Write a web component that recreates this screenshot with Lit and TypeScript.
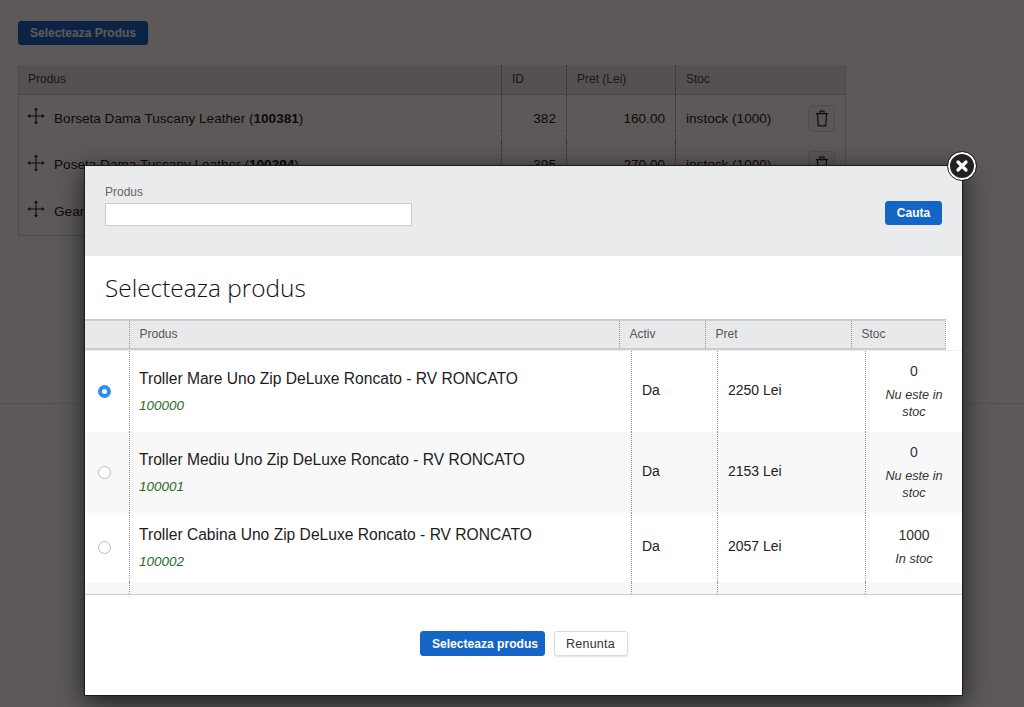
import { LitElement, html, css, svg } from 'lit';
import { customElement } from 'lit/decorators.js';

const backRows = [
  { name: 'Borseta Dama Tuscany Leather', code: '100381', id: 382, price: '160.00' },
  { name: 'Poseta Dama Tuscany Leather', code: '100394', id: 395, price: '270.00' },
  { name: 'Gear Dama Tuscany Leather', code: '100402', id: 403, price: '310.00' },
];

const products = [
  { name: 'Troller Mare Uno Zip DeLuxe Roncato - RV RONCATO', code: '100000', price: '2250 Lei', stock: '0', note: 'Nu este in stoc', checked: true },
  { name: 'Troller Mediu Uno Zip DeLuxe Roncato - RV RONCATO', code: '100001', price: '2153 Lei', stock: '0', note: 'Nu este in stoc', checked: false },
  { name: 'Troller Cabina Uno Zip DeLuxe Roncato - RV RONCATO', code: '100002', price: '2057 Lei', stock: '1000', note: 'In stoc', checked: false },
];

const moveIcon = svg`<path d="M9 1.5v15M1.5 9h15" fill="none" stroke="currentColor" stroke-width="1.1"/>
  <path d="M9 .5l2 2.6H7zM9 17.5l-2-2.6h4zM.5 9l2.6-2v4zM17.5 9l-2.6 2V7z" fill="currentColor"/>`;

const trashIcon = svg`<path d="M1 3.6h12M5 3.4V1.2h4v2.2M2.4 3.8l.9 12h7.4l.9-12" fill="none" stroke="currentColor" stroke-width="1.2"/>`;

@customElement('app-root')
export class AppRoot extends LitElement {
  static styles = css`
    :host {
      display: block;
      position: relative;
      height: 707px;
      overflow: hidden;
      background: #fff;
      font-family: "Liberation Sans", Arial, sans-serif;
      color: #222;
    }

    .content {
      height: 404px;
      box-sizing: border-box;
      padding: 21px 18px 0;
      border-bottom: 1px solid #e4e4e4;
    }

    button {
      font-family: inherit;
      cursor: pointer;
    }

    .btn-primary {
      height: 24px;
      padding: 0 11px;
      border: 1px solid #125bb5;
      border-radius: 3px;
      background: #1565c7;
      color: #fff;
      font-size: 12px;
      font-weight: bold;
    }

    .content .btn-primary {
      display: block;
      width: 130px;
      padding: 0;
    }

    table {
      border-spacing: 0;
      table-layout: fixed;
    }

    .back-table {
      width: 828px;
      margin-top: 20px;
      border: 1px solid #d8d8d8;
      border-top: 0;
      font-size: 13.6px;
    }

    .back-table th {
      height: 28px;
      padding: 0 10px 1px;
      background: #e8e9eb;
      border-bottom: 1px solid #c8c8c8;
      color: #444;
      font-size: 12px;
      font-weight: normal;
      text-align: left;
    }

    .back-table td {
      height: 46.5px;
      padding: 0 10px;
      color: #222;
    }

    .back-table th:first-child,
    .back-table td:first-child {
      padding-left: 9px;
    }

    .back-table th + th,
    .back-table td + td {
      border-left: 1px dotted #777;
    }

    .back-table .num {
      text-align: right;
    }

    .name-cell {
      display: flex;
      align-items: center;
      gap: 9px;
    }

    .move {
      width: 18px;
      height: 18px;
      margin: -4px 0 0 -1px;
      color: #222;
    }

    .stock-cell {
      display: flex;
      align-items: center;
      justify-content: space-between;
    }

    .trash {
      display: flex;
      align-items: center;
      justify-content: center;
      width: 27px;
      height: 27px;
      box-sizing: border-box;
      border: 1px solid #ddd;
      border-radius: 4px;
      background: #f6f6f6;
      color: #222;
    }

    .dim {
      position: absolute;
      inset: 0;
      background: rgba(6, 0, 0, 0.65);
    }

    .modal {
      position: absolute;
      left: 84px;
      top: 165px;
      width: 879px;
      height: 531px;
      box-sizing: border-box;
      border: 1px solid #1c1a1a;
      background: #fff;
      box-shadow: 0 6px 24px rgba(0, 0, 0, 0.7);
    }

    .close {
      position: absolute;
      left: 863px;
      top: -14px;
      width: 28px;
      height: 28px;
      padding: 0;
      box-sizing: border-box;
      border: 2px solid #fff;
      border-radius: 50%;
      outline: 1px solid #222;
      background: #222;
      color: #fff;
      display: flex;
      align-items: center;
      justify-content: center;
    }

    .search {
      display: flex;
      justify-content: space-between;
      align-items: flex-start;
      height: 90px;
      box-sizing: border-box;
      padding: 19px 20px 0;
      background: #e9ebed;
    }

    .search label {
      display: block;
      margin-bottom: 4px;
      color: #666;
      font-size: 12px;
      line-height: 14px;
    }

    .search input {
      display: block;
      width: 307px;
      height: 23px;
      box-sizing: border-box;
      border: 1px solid #ccc;
      background: #fff;
    }

    .search .btn-primary {
      width: 57px;
      margin-top: 16px;
      padding: 0;
      border-color: #1565c7;
    }

    h2 {
      margin: 0;
      height: 63px;
      box-sizing: border-box;
      padding: 15px 20px 0;
      font-family: "Open Sans", sans-serif;
      font-size: 24.4px;
      font-weight: 300;
      line-height: 33px;
      color: #111;
    }

    .head-table {
      width: 860px;
      border-top: 2px solid #ccc;
      border-bottom: 2px solid #ccc;
      border-right: 1px dotted #999;
      box-sizing: border-box;
    }

    .head-table th {
      height: 25px;
      padding: 0 9.5px 2px;
      background: #e8e9eb;
      color: #555;
      font-size: 12px;
      font-weight: normal;
      text-align: left;
    }

    .head-table th + th {
      border-left: 1px dotted #999;
    }

    .scroller {
      height: 245px;
      overflow: hidden;
      border-bottom: 1px solid #ccc;
      box-sizing: border-box;
      border-top: 1px solid #eee;
    }

    .body-table {
      width: 877px;
      font-size: 14px;
    }

    .body-table td {
      padding: 0 10px 3px;
      color: #222;
    }

    .body-table td + td {
      border-left: 1px dotted #999;
    }

    .body-table tr:nth-child(even) td {
      background: #f8f8f8;
    }

    .body-table .radio-cell {
      padding: 0 6px 2px 0;
      text-align: center;
    }

    .radio {
      display: inline-block;
      width: 13px;
      height: 13px;
      box-sizing: border-box;
      border: 1px solid #bbb;
      border-radius: 50%;
      background: #fff;
      vertical-align: middle;
    }

    .radio.on {
      border: 4.5px solid #2f8cf0;
    }

    .body-table .product-cell {
      padding: 0 10px 0 9px;
    }

    .product-name {
      font-size: 15.6px;
      line-height: 17px;
      margin-bottom: 10px;
      color: #1c1c1c;
    }

    .product-code {
      color: #2b6a2b;
      font-size: 13.5px;
      font-style: italic;
      line-height: 17px;
    }

    .body-table .stock-col {
      padding: 0 10px;
      text-align: center;
      color: #333;
    }

    .stock-qty {
      line-height: 17px;
      margin-bottom: 7px;
    }

    .stock-note {
      font-size: 12.7px;
      font-style: italic;
      line-height: 17px;
    }

    .actions {
      display: flex;
      justify-content: center;
      gap: 9px;
      padding-top: 36px;
    }

    .actions .btn-primary {
      width: 125px;
      height: 25px;
      padding: 0 0 0 6px;
      border-color: #1565c7;
      font-size: 12.1px;
    }

    .btn-plain {
      width: 74px;
      height: 25px;
      padding: 0;
      box-sizing: border-box;
      border: 1px solid #ddd;
      border-radius: 3px;
      background: #fff;
      box-shadow: 0 1px 2px rgba(0, 0, 0, 0.12);
      color: #333;
      font-size: 12.5px;
      letter-spacing: 0.25px;
    }
  `;

  renderBack() {
    return html`
      <div class="content">
        <button class="btn-primary">Selecteaza Produs</button>
        <table class="back-table">
          <colgroup>
            <col style="width:482px" /><col style="width:65px" /><col style="width:109px" /><col style="width:170px" />
          </colgroup>
          <thead>
            <tr><th>Produs</th><th>ID</th><th>Pret (Lei)</th><th>Stoc</th></tr>
          </thead>
          <tbody>
            ${backRows.map(
              (row) => html`
                <tr>
                  <td>
                    <div class="name-cell">
                      <svg class="move" viewBox="0 0 18 18">${moveIcon}</svg>
                      <span>${row.name} (<b>${row.code}</b>)</span>
                    </div>
                  </td>
                  <td class="num">${row.id}</td>
                  <td class="num">${row.price}</td>
                  <td>
                    <div class="stock-cell">
                      <span>instock (1000)</span>
                      <span class="trash">
                        <svg width="14" height="17" viewBox="0 0 14 17">${trashIcon}</svg>
                      </span>
                    </div>
                  </td>
                </tr>
              `,
            )}
          </tbody>
        </table>
      </div>
    `;
  }

  renderModal() {
    return html`
      <div class="modal">
        <button class="close" aria-label="Inchide">
          <svg width="14" height="14" viewBox="0 0 14 14">
            <path d="M3 3l8 8M11 3l-8 8" stroke="currentColor" stroke-width="3.2" stroke-linecap="round" />
          </svg>
        </button>
        <div class="search">
          <div>
            <label>Produs</label>
            <input type="text" />
          </div>
          <button class="btn-primary">Cauta</button>
        </div>
        <h2>Selecteaza produs</h2>
        <table class="head-table">
          <colgroup>
            <col style="width:44px" /><col style="width:490px" /><col style="width:86px" /><col style="width:146px" /><col style="width:94px" />
          </colgroup>
          <thead>
            <tr><th></th><th>Produs</th><th>Activ</th><th>Pret</th><th>Stoc</th></tr>
          </thead>
        </table>
        <div class="scroller">
          <table class="body-table">
            <colgroup>
              <col style="width:44px" /><col style="width:502px" /><col style="width:86px" /><col style="width:148px" /><col style="width:97px" />
            </colgroup>
            <tbody>
              ${products.map(
                (p, i) => html`
                  <tr style="height:${i === 2 ? 69 : 81}px">
                    <td class="radio-cell"><span class="radio ${p.checked ? 'on' : ''}"></span></td>
                    <td class="product-cell">
                      <div class="product-name">${p.name}</div>
                      <div class="product-code">${p.code}</div>
                    </td>
                    <td>Da</td>
                    <td>${p.price}</td>
                    <td class="stock-col">
                      <div class="stock-qty">${p.stock}</div>
                      <div class="stock-note">${p.note}</div>
                    </td>
                  </tr>
                `,
              )}
              <tr style="height:30px"><td></td><td></td><td></td><td></td><td></td></tr>
            </tbody>
          </table>
        </div>
        <div class="actions">
          <button class="btn-primary">Selecteaza produs</button>
          <button class="btn-plain">Renunta</button>
        </div>
      </div>
    `;
  }

  render() {
    return html`
      ${this.renderBack()}
      <div class="dim"></div>
      ${this.renderModal()}
    `;
  }
}
